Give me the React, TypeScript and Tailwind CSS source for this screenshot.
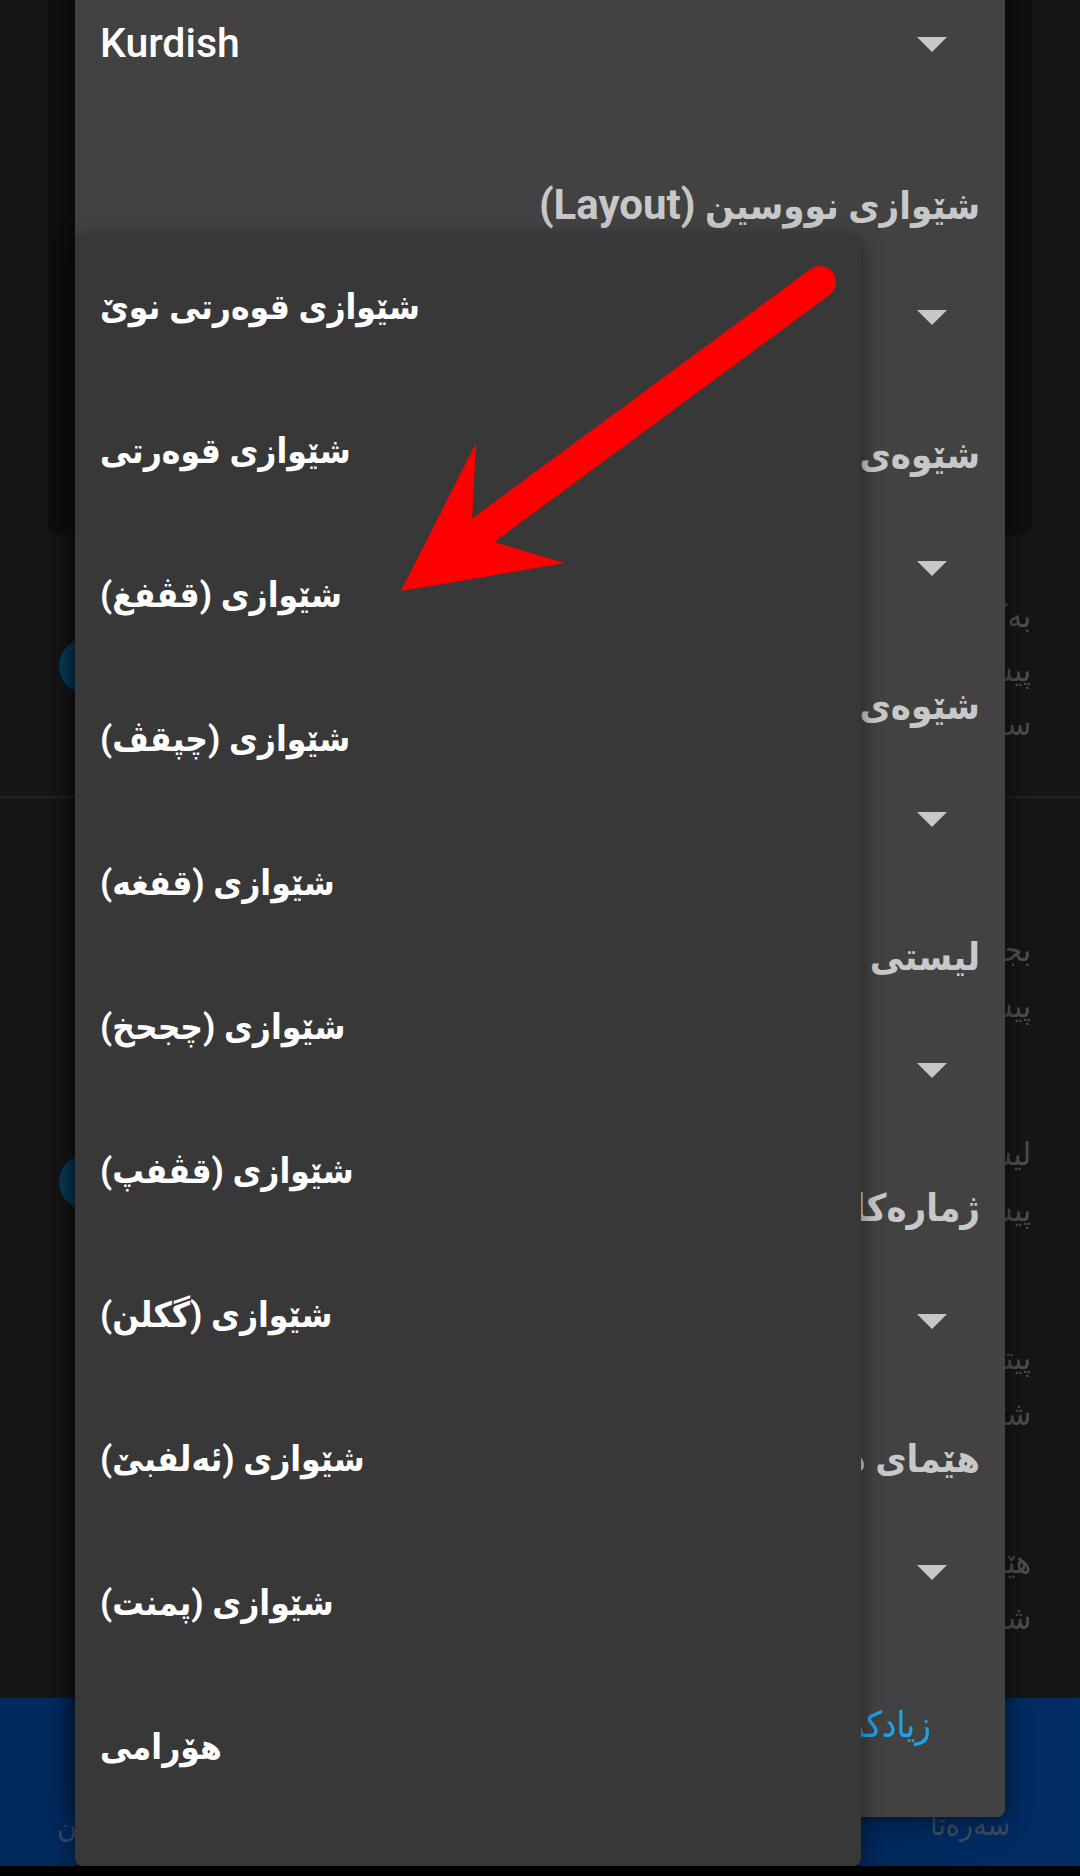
import React from "react";

const menuItems = [
  "شێوازی قوەرتی نوێ",
  "شێوازی قوەرتی",
  "شێوازی (قڤفغ)",
  "شێوازی (چپقڤ)",
  "شێوازی (قفغه)",
  "شێوازی (چجحخ)",
  "شێوازی (قڤفپ)",
  "شێوازی (گکلن)",
  "شێوازی (ئەلفبێ)",
  "شێوازی (پمنت)",
  "هۆرامی",
];

const blocks = [
  { label: "شێوەی کیبۆرد", value: "تاریک" },
  { label: "شێوەی پیتەکان", value: "ئاسایی" },
  { label: "لیستی وشەکان", value: "کوردی" },
  { label: "ژمارەکانی کیبۆرد", value: "کوردی" },
  { label: "هێمای دیاریکراو", value: "ئاسایی" },
];

const rows = [
  ["بجوڵێنە بۆ گۆڕینی زمان", "پیشاندانی زمانی ئێستا"],
  ["لیستی وشە پێشنیارکراوەکان", "پیشاندانی وشەکان لە سەرەوە"],
  ["پیتە گەورەکان بە شێوەی خۆکار", "شێوازی نووسینی دەقەکان"],
  ["هێمای خاڵ بە دوو لێدان", "شوێنی بۆشایی دانان"],
];

function Caret() {
  return (
    <svg width="30" height="15" viewBox="0 0 30 15" className="shrink-0">
      <polygon points="0,0 30,0 15,15" fill="#c8c8c8" />
    </svg>
  );
}

function Dropdown({ value }: { value: string }) {
  return (
    <div className="h-[136px] shrink-0 flex items-center justify-between">
      <span dir="auto" className="text-[35px] font-bold text-white">{value}</span>
      <div className="mr-[33px]">
        <Caret />
      </div>
    </div>
  );
}

function Label({ children }: { children: React.ReactNode }) {
  return (
    <div className="h-[90px] flex items-center justify-end">
      <span dir="rtl" className="text-[38px] font-bold text-[#c8c8c8]">{children}</span>
    </div>
  );
}

export default function App() {
  return (
    <div className="relative w-[1080px] h-[1876px] overflow-hidden bg-[#161616] font-[Roboto,'DejaVu_Sans_Condensed','DejaVu_Sans',sans-serif]">
      {/* page behind the dialog */}
      <div className="flex flex-col h-full">
        <div className="mx-[48px] h-[535px] shrink-0 rounded-b-[12px] bg-[#0f0f0f]" />

        <section className="h-[261px] shrink-0 flex items-center justify-between pl-[59px] pr-[49px]">
          <div className="w-[56px] h-[56px] rounded-full bg-[#083b5a]" />
          <div dir="rtl" className="text-[32px] leading-[54px] text-[#4f4f4f] text-right pt-[9px]">
            <p>بەکارهێنانی دەنگ لە کاتی نووسین</p>
            <p>پیشاندانی دەنگی کلیلەکان</p>
            <p>سەرجەم کلیلەکان</p>
          </div>
        </section>

        <div className="h-[2px] shrink-0 bg-[#222222]" />

        <section className="pt-[78px] flex flex-col">
          {rows.map((r, i) => (
            <div key={i} className="h-[204px] flex items-center justify-between pl-[59px] pr-[49px]">
              {i === 1 ? <div className="w-[56px] h-[56px] rounded-full bg-[#083b5a]" /> : <div />}
              <div dir="rtl" className="text-[32px] leading-[56px] text-[#4f4f4f] text-right">
                <p>{r[0]}</p>
                <p>{r[1]}</p>
              </div>
            </div>
          ))}
        </section>

        <nav className="mt-auto h-[168px] shrink-0 flex items-end justify-between pl-[57px] pr-[70px] pb-[24px] bg-gradient-to-r from-[#002a5e] via-[#00224f] to-[#002d64]">
          <span dir="rtl" className="text-[30px] leading-[34px] text-[#3b4a60]">ڕێکخستن</span>
          <span dir="rtl" className="text-[30px] leading-[34px] text-[#3b4a60]">دەربارە</span>
          <span dir="rtl" className="text-[30px] leading-[34px] text-[#3b4a60]">سەرەتا</span>
        </nav>
        <div className="h-[10px] shrink-0 bg-black" />
      </div>

      {/* settings dialog */}
      <div className="absolute left-[75px] top-[-24px] w-[930px] h-[1841px] bg-[#424242] rounded-b-[8px] shadow-[0_0_24px_rgba(0,0,0,0.6)] px-[25px] flex flex-col">
        <div className="h-[136px] shrink-0 flex items-center justify-between">
          <span className="text-[41px] font-medium text-white">Kurdish</span>
          <div className="mr-[33px]">
            <Caret />
          </div>
        </div>
        <div className="shrink-0 flex flex-col mt-[47px]">
          <Label>
            شێوازی نووسین <span className="text-[42px]">(Layout)</span>
          </Label>
          <Dropdown value="شێوازی قوەرتی نوێ" />
        </div>
        {blocks.map((b, i) => (
          <div key={i} className="shrink-0 flex flex-col mt-[25px]">
            <Label>{b.label}</Label>
            <Dropdown value={b.value} />
          </div>
        ))}
        <div className="mt-[45px] h-[80px] shrink-0 flex items-center justify-end gap-[60px] pr-[49px]">
          <span dir="rtl" className="text-[36px] text-[#1da3ea]">پاشگەزبوونەوە</span>
          <span dir="rtl" className="text-[36px] text-[#1da3ea]">زیادکردن</span>
        </div>
      </div>

      {/* open dropdown menu */}
      <div className="absolute left-[75px] top-[236px] w-[786px] h-[1630px] bg-[#383838] rounded-[8px] shadow-[0_4px_20px_rgba(0,0,0,0.5)] flex flex-col">
        {menuItems.map((m) => (
          <div key={m} className="h-[144px] shrink-0 flex items-center pl-[25px]">
            <span dir="rtl" className="text-[35px] font-bold text-white">{m}</span>
          </div>
        ))}
      </div>

      {/* red annotation arrow */}
      <svg className="absolute left-0 top-0 pointer-events-none" width="1080" height="1876" viewBox="0 0 1080 1876">
        <line x1="820" y1="282" x2="470" y2="540" stroke="#ff0000" strokeWidth="32" strokeLinecap="round" />
        <polygon points="401,591 476,443 472,522 494,542 565,563" fill="#ff0000" />
      </svg>
    </div>
  );
}
